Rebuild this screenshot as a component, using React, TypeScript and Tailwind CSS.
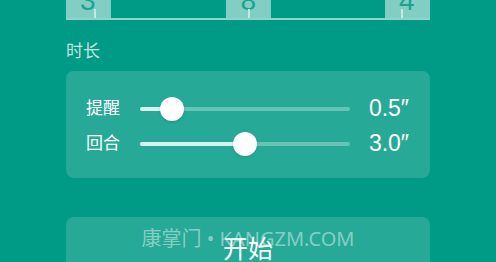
import React from "react";

const cells = [
  { digit: "3", digitLeft: "left-[14px]", lineLeft: "left-[28px]" },
  { digit: "8", digitLeft: "left-[15px]", lineLeft: "left-[22px]" },
  { digit: "4", digitLeft: "left-[14px]", lineLeft: "left-[16px]" },
];

const sliders = [
  { label: "提醒", value: 0.15, text: "0.5″" },
  { label: "回合", value: 0.5, text: "3.0″" },
];

function Slider({ value }: { value: number }) {
  return (
    <div className="relative w-[210px] h-[24px] flex items-center">
      <div className="w-full h-[4px] rounded-full bg-white/30" />
      <div
        className="absolute left-0 h-[4px] rounded-full bg-white/75"
        style={{ width: `${value * 100}%` }}
      />
      <div
        className="absolute w-[24px] h-[24px] -ml-[12px] rounded-full bg-white shadow-sm"
        style={{ left: `${value * 100}%` }}
      />
    </div>
  );
}

export default function App() {
  return (
    <div
      className="relative w-[496px] h-[262px] overflow-hidden bg-[#009b87] px-[66px]"
      style={{ fontFamily: '"Liberation Sans", "Noto Sans CJK SC", sans-serif' }}
    >
      {/* number strip, scrolled so only the bottom shows */}
      <div className="flex justify-between h-[20px] border-b-2 border-[#8fd3ca]">
        {cells.map((c, i) => (
          <div key={i} className="relative w-[45px] h-[18px] bg-[#83cec4] overflow-hidden">
            <span
              className={`absolute ${c.digitLeft} -top-[13px] text-[28px] leading-[28px] text-[#1aa390]`}
            >
              {c.digit}
            </span>
            <div className={`absolute ${c.lineLeft} top-[9px] bottom-0 w-[2px] bg-[#c4e9e4]`} />
          </div>
        ))}
      </div>

      <div className="pt-[21px] mb-[8px] text-[17px] leading-[22px] text-white/75">时长</div>

      <div className="rounded-lg bg-[#26a997] pl-[20px] pr-[21px] pt-[20px] pb-[17px]">
        {sliders.map((s) => (
          <div key={s.label} className="flex items-center h-[35px]">
            <div className="w-[54px] text-[17px] text-white">{s.label}</div>
            <Slider value={s.value} />
            <div className="flex-1 text-right text-[23px] text-white">{s.text}</div>
          </div>
        ))}
      </div>

      <div className="mt-[39px] h-[60px] rounded-lg bg-[#26a997] flex justify-center pt-[16px]">
        <span className="text-[25px] leading-[32px] text-white">开始</span>
      </div>

      {/* watermark */}
      <div
        className="absolute left-0 right-0 top-[226px] text-center text-[20px] leading-[26px] text-white/45 pointer-events-none"
        style={{ fontFamily: '"Noto Sans", "Noto Sans CJK SC", sans-serif' }}
      >
        康掌门 • KANGZM.COM
      </div>
    </div>
  );
}
